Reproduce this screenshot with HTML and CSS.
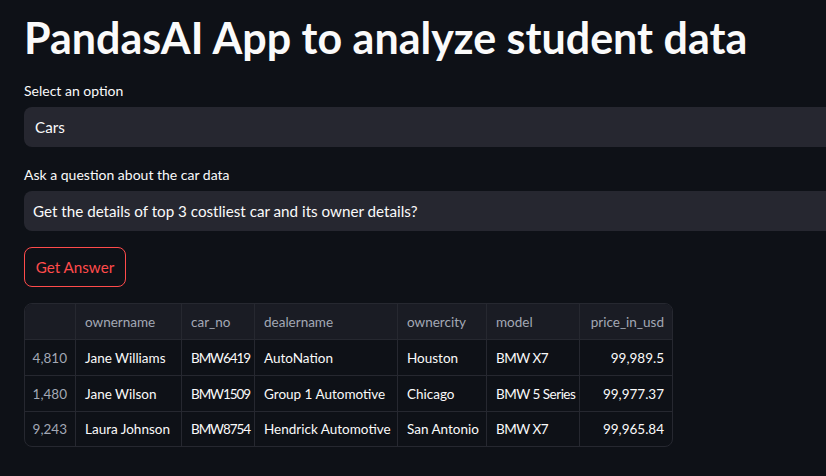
FILE: index.html
```html
<!DOCTYPE html>
<html>
<head>
<meta charset="utf-8">
<link rel="stylesheet" href="styles.css">
</head>
<body>
<main class="app">
  <h1 class="title">PandasAI App to analyze student data</h1>
  <div class="field first">
    <label class="label">Select an option</label>
    <div class="box select">Cars</div>
  </div>
  <div class="field">
    <label class="label">Ask a question about the car data</label>
    <div class="box input">Get the details of top 3 costliest car and its owner details?</div>
  </div>
  <button class="btn">Get Answer</button>
  <div class="grid">
    <div class="row head">
      <div class="c idx"></div>
      <div class="c w1">ownername</div>
      <div class="c w2">car_no</div>
      <div class="c w3">dealername</div>
      <div class="c w4">ownercity</div>
      <div class="c w5">model</div>
      <div class="c w6 num">price_in_usd</div>
    </div>
    <div class="row">
      <div class="c idx num">4,810</div>
      <div class="c w1">Jane Williams</div>
      <div class="c w2 tight">BMW6419</div>
      <div class="c w3">AutoNation</div>
      <div class="c w4">Houston</div>
      <div class="c w5 semi">BMW X7</div>
      <div class="c w6 num">99,989.5</div>
    </div>
    <div class="row">
      <div class="c idx num">1,480</div>
      <div class="c w1">Jane Wilson</div>
      <div class="c w2 tight">BMW1509</div>
      <div class="c w3">Group 1 Automotive</div>
      <div class="c w4">Chicago</div>
      <div class="c w5 semi">BMW 5 Series</div>
      <div class="c w6 num">99,977.37</div>
    </div>
    <div class="row last">
      <div class="c idx num">9,243</div>
      <div class="c w1">Laura Johnson</div>
      <div class="c w2 tight">BMW8754</div>
      <div class="c w3">Hendrick Automotive</div>
      <div class="c w4">San Antonio</div>
      <div class="c w5 semi">BMW X7</div>
      <div class="c w6 num">99,965.84</div>
    </div>
  </div>
</main>
</body>
</html>
```

FILE: styles.css
```css
html, body {
  margin: 0;
  padding: 0;
  background: #0e1117;
  overflow: hidden;
  width: 826px;
  height: 476px;
}
body {
  font-family: "Lato", "Noto Sans", sans-serif;
  color: #fafafa;
}
.app {
  width: 880px;
  padding: 10px 0 0 24px;
  display: flex;
  flex-direction: column;
}
.title {
  margin: 0;
  font-size: 43px;
  font-weight: 700;
  line-height: 56px;
  height: 72px;
}
.field {
  display: flex;
  flex-direction: column;
  margin-bottom: 16px;
}
.field.first { margin-bottom: 19px; }
.label {
  font-size: 14px;
  line-height: 18px;
  height: 25px;
  color: #fafafa;
}
.box {
  height: 40px;
  background: #262730;
  border-radius: 8px 0 0 8px;
  display: flex;
  align-items: center;
  font-size: 15.2px;
}
.select { padding-left: 11px; }
.input { padding-left: 9px; }
.btn {
  align-self: flex-start;
  width: 102px;
  height: 40px;
  background: transparent;
  border: 1px solid #ff4b4b;
  border-radius: 8px;
  color: #ff4b4b;
  font-family: "Lato", sans-serif;
  font-size: 15.2px;
  padding: 0;
  margin-bottom: 16px;
}
.grid {
  width: 647px;
  border: 1px solid #262830;
  border-radius: 8px;
  overflow: hidden;
  font-size: 13.5px;
}
.row {
  display: flex;
  height: 35px;
  border-bottom: 1px solid #262830;
}
.row.last { border-bottom: none; height: 34px; }
.head {
  background: #1a1c24;
  color: #a3a8b5;
}
.c {
  display: flex;
  align-items: center;
  padding: 0 8px 0 9px;
  border-right: 1px solid #262830;
  box-sizing: border-box;
  white-space: nowrap;
  overflow: hidden;
}
.c:last-child { border-right: none; }
.num { justify-content: flex-end; }
.tight { letter-spacing: -1.1px; }
.semi { letter-spacing: -0.5px; }
.idx { width: 51px; color: #a3a8b5; }
.w1 { width: 106px; }
.w2 { width: 73px; }
.w3 { width: 143px; }
.w4 { width: 89px; }
.w5 { width: 93px; }
.w6 { width: 92px; }
```
